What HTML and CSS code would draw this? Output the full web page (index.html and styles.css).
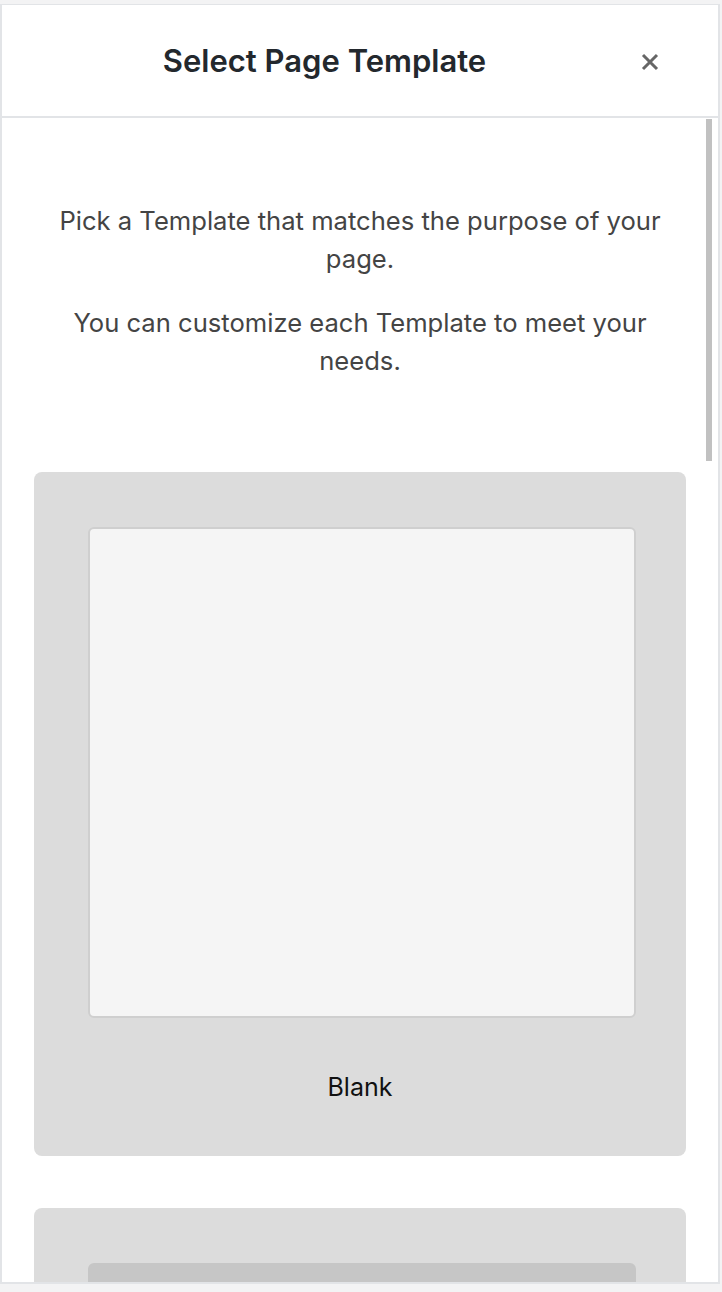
FILE: index.html
```html
<!DOCTYPE html>
<html lang="en">
<head>
    <meta charset="UTF-8">
    <meta name="viewport" content="width=device-width, initial-scale=1.0">
    <title>Select Page Template</title>
    <link rel="stylesheet" href="styles.css">
</head>
<body>
    <div class="modal">
        <div class="modal-header">
            <h1>Select Page Template</h1>
            <button type="button" class="close" aria-label="Close">
                <svg width="20" height="20" viewBox="0 0 20 20">
                    <path d="M3 3 L17 17 M17 3 L3 17" stroke="currentColor" stroke-width="3" fill="none"/>
                </svg>
            </button>
        </div>
        <div class="modal-body">
            <div class="scroll-thumb"></div>
            <div class="intro">
                <p>Pick a Template that matches the purpose of your page.</p>
                <p>You can customize each Template to meet your needs.</p>
            </div>
            <div class="templates">
                <div class="template">
                    <div class="preview"></div>
                    <div class="template-name">Blank</div>
                </div>
                <div class="template">
                    <div class="preview preview-dark"></div>
                    <div class="template-name"></div>
                </div>
            </div>
        </div>
    </div>
</body>
</html>
```

FILE: styles.css
```css
body {
    margin: 0;
    background: #f3f3f4;
    font-family: Inter, "Noto Sans", sans-serif;
}

.modal {
    box-sizing: border-box;
    width: 720px;
    height: 1280px;
    margin-top: 4px;
    background: #fff;
    border: 2px solid #e2e4e7;
    border-top-width: 1px;
    display: flex;
    flex-direction: column;
    overflow: hidden;
}

.modal-header {
    position: relative;
    height: 111px;
    flex-shrink: 0;
    display: flex;
    align-items: center;
    border-bottom: 2px solid #e2e4e7;
}

.modal-header h1 {
    flex: 1;
    margin: 0;
    padding-right: 71px;
    text-align: center;
    font-size: 31px;
    font-weight: 600;
    color: #23282d;
}

.close {
    position: absolute;
    right: 58px;
    top: 47px;
    padding: 0;
    border: none;
    background: none;
    color: #666;
    width: 20px;
    height: 20px;
    cursor: pointer;
}

.close svg {
    display: block;
}

.modal-body {
    position: relative;
    flex: 1;
    overflow: hidden;
    padding: 0 32px;
}

.scroll-thumb {
    position: absolute;
    left: 704px;
    top: 1px;
    width: 6px;
    height: 342px;
    background: #c1c1c1;
}

.intro {
    margin-top: 84px;
    text-align: center;
    color: #444;
    font-size: 25.6px;
    line-height: 38px;
}

.intro p {
    margin: 0 18px 26px;
}

.templates {
    margin-top: 92px;
    display: flex;
    flex-direction: column;
    gap: 52px;
}

.template {
    box-sizing: border-box;
    height: 684px;
    padding: 55px 50px 0;
    background: #dcdcdc;
    border-radius: 8px;
}

.preview {
    box-sizing: border-box;
    height: 491px;
    margin-left: 4px;
    background: #f5f5f5;
    border: 2px solid #cfcfcf;
    border-radius: 6px;
}

.preview-dark {
    background: #c6c6c6;
    border-color: #c6c6c6;
}

.template-name {
    margin-top: 54px;
    text-align: center;
    font-size: 25px;
    color: #111;
}
```
